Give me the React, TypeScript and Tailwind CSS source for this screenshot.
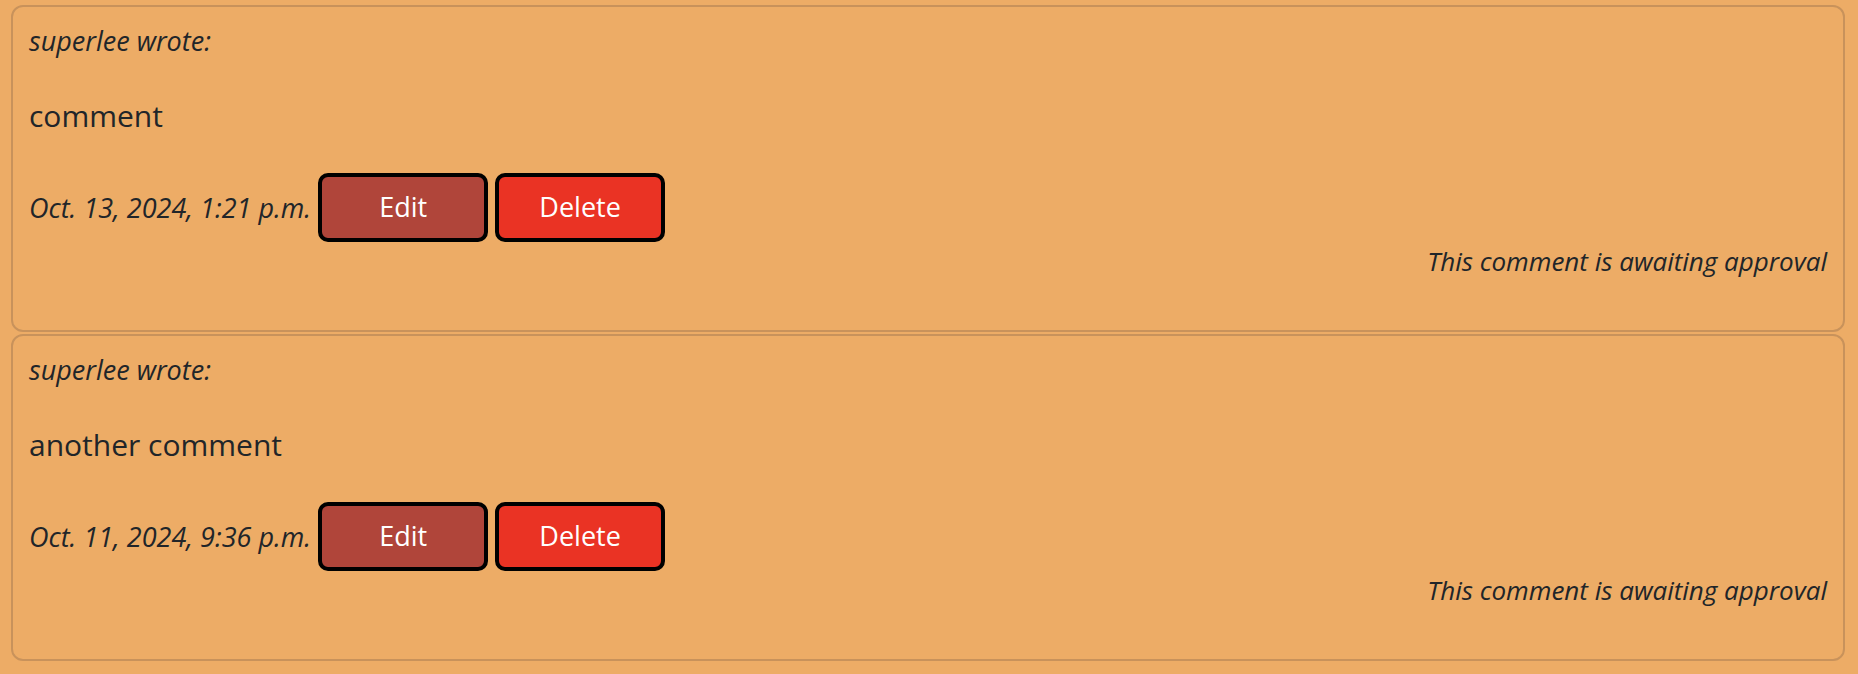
import React from "react"

const comments = [
    { id: 1, author: "superlee", body: "comment", date: "Oct. 13, 2024, 1:21 p.m." },
    { id: 2, author: "superlee", body: "another comment", date: "Oct. 11, 2024, 9:36 p.m." },
]

function CommentCard({ author, body, date }: { author: string; body: string; date: string }) {
    return (
        <div className="rounded-[12px] border-2 border-[#c8925b] px-[16px] pt-[16px] pb-[50px]">
            <p className="text-[27px] leading-[36px] italic">{author} wrote:</p>
            <p className="mt-[37px] text-[30px] leading-[40px]">{body}</p>
            <div className="mt-[37px] flex items-center">
                <p className="text-[27px] leading-[36px] italic">{date}</p>
                <button className="ml-[7px] h-[69px] w-[170px] rounded-[10px] border-[4px] border-black bg-[#b0453a] text-[27px] text-white">
                    Edit
                </button>
                <button className="ml-[7px] h-[69px] w-[170px] rounded-[10px] border-[4px] border-black bg-[#ea3324] text-[27px] text-white">
                    Delete
                </button>
            </div>
            <p className="text-right text-[26px] leading-[38px] italic">This comment is awaiting approval</p>
        </div>
    )
}

export default function App() {
    return (
        <div
            className="min-h-screen bg-[#edac66] pt-[5px] pl-[11px] pr-[13px] text-[#212529]"
            style={{ fontFamily: '"Open Sans", sans-serif' }}
        >
            <div className="flex flex-col gap-[2px]">
                {comments.map((c) => (
                    <CommentCard key={c.id} author={c.author} body={c.body} date={c.date} />
                ))}
            </div>
        </div>
    )
}
